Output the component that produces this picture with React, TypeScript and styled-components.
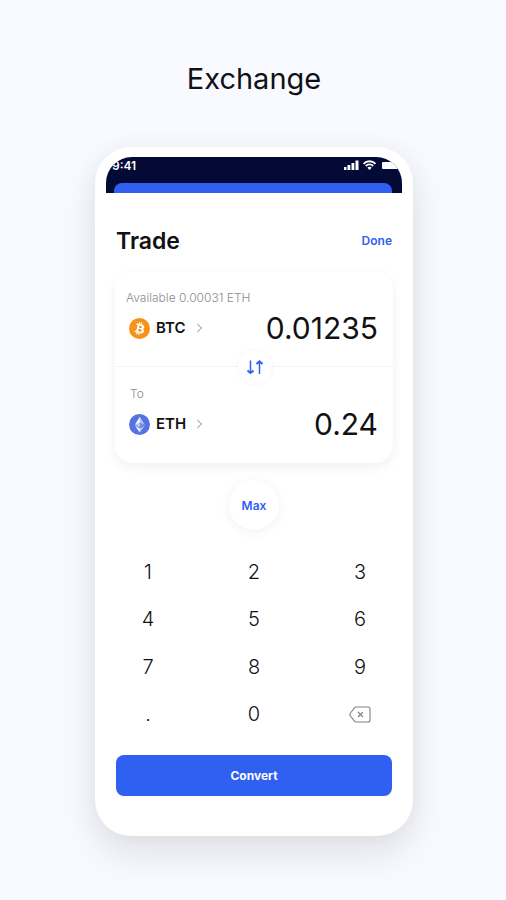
import React from "react";
import styled, { createGlobalStyle } from "styled-components";

const blue = "#3060f2";

const GlobalStyle = createGlobalStyle`
  *, *::before, *::after { box-sizing: border-box; }
  body {
    margin: 0;
    background: #f8faff;
    color: #111114;
    font-family: Inter, "Liberation Sans", sans-serif;
  }
  button { font-family: inherit; color: inherit; border: 0; padding: 0; background: none; cursor: pointer; }
`;

const Page = styled.main`
  min-height: 100vh;
  display: flex;
  flex-direction: column;
  align-items: center;
  padding: 61px 15px 63px 17px;
  background: #f8faff;
`;

const PageTitle = styled.h1`
  margin: 0 0 50px;
  font-size: 29px;
  line-height: 36px;
  font-weight: 400;
`;

const Phone = styled.section`
  width: 100%;
  max-width: 318px;
  padding: 10px 0 40px;
  border-radius: 36px;
  background: #fff;
  box-shadow: 0 18px 36px rgba(20, 22, 30, 0.1), 0 0 24px rgba(20, 22, 30, 0.04);
`;

const StatusBar = styled.div`
  margin: 0 11px;
  height: 36px;
  display: flex;
  flex-direction: column;
  justify-content: space-between;
  overflow: hidden;
  border-radius: 26px 26px 0 0;
  background: #020a35;
  color: #fff;
`;

const StatusRow = styled.div`
  display: flex;
  align-items: center;
  justify-content: space-between;
  height: 18px;
  padding-left: 6px;
`;

const Clock = styled.span`
  font-size: 12px;
  line-height: 18px;
  font-weight: 600;
`;

const SheetBehind = styled.div`
  height: 10px;
  margin: 0 10px 0 8px;
  border-radius: 8px 8px 0 0;
  background: ${blue};
`;

const Header = styled.header`
  display: flex;
  align-items: center;
  justify-content: space-between;
  margin: 32px 21px 14px;
  height: 32px;
`;

const Heading = styled.h2`
  margin: 0;
  font-size: 23px;
  line-height: 32px;
  font-weight: 600;
`;

const LinkButton = styled.button`
  font-size: 12px;
  line-height: 16px;
  font-weight: 600;
  color: ${blue};
`;

const Card = styled.div`
  position: relative;
  margin: 0 20px;
  border-radius: 18px;
  background: #fff;
  box-shadow: 0 4px 12px rgba(20, 22, 30, 0.06);
`;

const Side = styled.div<{ $divided?: boolean }>`
  height: 96px;
  padding: 19px 15px 0 11px;
  border-bottom: ${(p) => (p.$divided ? "1px solid #f4f4f5" : "0")};
`;

const Caption = styled.div<{ $inset?: boolean }>`
  padding-left: ${(p) => (p.$inset ? "4px" : "0")};
  font-size: 12px;
  line-height: 16px;
  font-weight: 300;
  color: #8c8c90;
`;

const AssetRow = styled.div`
  display: flex;
  align-items: center;
  justify-content: space-between;
  height: 44px;
`;

const AssetButton = styled.button`
  display: flex;
  align-items: center;
  gap: 6px;
  padding-left: 3px;
  font-size: 15px;
  line-height: 20px;
  font-weight: 600;

  svg:last-child { margin-left: 4px; }
`;

const Amount = styled.span`
  font-size: 30px;
  line-height: 40px;
`;

const SwapButton = styled.button`
  position: absolute;
  top: 50%;
  left: 50%;
  width: 34px;
  height: 34px;
  margin: -17px 0 0 -16px;
  display: grid;
  place-items: center;
  border-radius: 50%;
  background: #fff;
  box-shadow: 0 0 4px rgba(20, 22, 30, 0.05);
`;

const MaxButton = styled.button`
  display: block;
  width: 50px;
  height: 50px;
  margin: 17px auto 18px;
  border-radius: 50%;
  background: #fff;
  box-shadow: 0 2px 12px rgba(20, 22, 30, 0.06);
  color: ${blue};
  font-size: 12px;
  font-weight: 600;
`;

const Keypad = styled.div`
  display: grid;
  grid-template-columns: repeat(3, 1fr);
  grid-auto-rows: 1fr;
  height: 190px;
`;

const Key = styled.button`
  display: grid;
  place-items: center;
  font-size: 20px;
  line-height: 24px;
  font-weight: 300;
`;

const Footer = styled.div`
  padding: 17px 21px 0;
`;

const ConvertButton = styled.button`
  width: 100%;
  height: 41px;
  border-radius: 8px;
  background: ${blue};
  color: #fff;
  font-size: 12px;
  font-weight: 700;
`;

const StatusIcons = () => (
  <svg width="59" height="18" viewBox="0 0 59 18" fill="#fff" aria-hidden="true">
    <rect x="1" y="10" width="2.5" height="3" />
    <rect x="4.5" y="8" width="2.8" height="5" />
    <rect x="8.5" y="6" width="2.8" height="7" />
    <rect x="12.5" y="3.5" width="3" height="9.5" />
    <g fill="none" stroke="#fff" strokeWidth="1.8">
      <path d="M20.5 6.8a8.3 8.3 0 0 1 12 0" />
      <path d="M22.8 9a5.2 5.2 0 0 1 7.4 0" />
    </g>
    <path d="M24.3 10.8a3.1 3.1 0 0 1 4.4 0L26.5 13z" />
    <rect x="39" y="5" width="17" height="7" rx="1" />
  </svg>
);

const Chevron = () => (
  <svg width="7" height="10" viewBox="0 0 7 10" fill="none" stroke="#b4b4b8" strokeWidth="1.2" aria-hidden="true">
    <path d="M1.2 1 5.5 5 1.2 9" />
  </svg>
);

const Bitcoin = () => (
  <svg width="21" height="21" viewBox="0 0 32 32" aria-hidden="true">
    <circle cx="16" cy="16" r="16" fill="#f7931a" />
    <path
      fill="#fff"
      d="M23.19 14.02c.31-2.1-1.29-3.23-3.47-3.98l.71-2.84-1.73-.43-.69 2.77-1.38-.33.69-2.78-1.72-.43-.71 2.84-1.1-.26-2.39-.6-.46 1.85s1.28.3 1.26.31c.7.18.83.64.8 1.01l-1.96 7.87c-.09.21-.31.54-.8.41.02.03-1.26-.31-1.26-.31l-.86 1.98 3.48.88-.72 2.87 1.73.43.71-2.84 1.38.36-.71 2.83 1.73.43.72-2.87c2.95.56 5.17.33 6.1-2.34.75-2.14-.03-3.38-1.59-4.19 1.13-.26 1.98-1 2.21-2.54zm-3.95 5.54c-.53 2.15-4.15.99-5.32.7l.95-3.81c1.17.29 4.93.87 4.37 3.11zm.53-5.57c-.49 1.95-3.5.96-4.47.72l.86-3.46c.98.25 4.12.7 3.61 2.74z"
    />
  </svg>
);

const Ethereum = () => (
  <svg width="21" height="21" viewBox="0 0 32 32" aria-hidden="true">
    <circle cx="16" cy="16" r="16" fill="#5572e0" />
    <g fill="#fff">
      <path fillOpacity=".6" d="M16.5 4v8.87l7.49 3.35z" />
      <path d="M16.5 4 9 16.22l7.5-3.35z" />
      <path fillOpacity=".6" d="M16.5 21.97v6.03L24 17.62z" />
      <path d="M16.5 28v-6.03L9 17.62z" />
      <path fillOpacity=".2" d="m16.5 20.57 7.49-4.35-7.49-3.35z" />
      <path fillOpacity=".6" d="m9 16.22 7.5 4.35v-7.7z" />
    </g>
  </svg>
);

const SwapArrows = () => (
  <svg width="20" height="18" viewBox="0 0 20 18" fill="none" stroke={blue} strokeWidth="1.5" aria-hidden="true">
    <path d="M5.5 2.5v12M14.5 16V4" />
    <path d="M2.5 12.4 5.5 15l3-2.6M11.5 6l3-2.6 3 2.6" strokeWidth="2" />
  </svg>
);

const Backspace = () => (
  <svg width="22" height="17" viewBox="0 0 22 17" fill="none" stroke="#808084" strokeWidth="1.1" aria-hidden="true">
    <path d="M7 1h12a2 2 0 0 1 2 2v11a2 2 0 0 1-2 2H7a2 2 0 0 1-1.4-.6L1.5 10a2.2 2.2 0 0 1 0-3l4.1-5.4A2 2 0 0 1 7 1z" />
    <path d="m9 6 5 5m0-5-5 5" />
  </svg>
);

const keys = ["1", "2", "3", "4", "5", "6", "7", "8", "9", ".", "0"];

export default function App() {
  return (
    <Page>
      <GlobalStyle />
      <PageTitle>Exchange</PageTitle>
      <Phone>
        <StatusBar>
          <StatusRow>
            <Clock>9:41</Clock>
            <StatusIcons />
          </StatusRow>
          <SheetBehind />
        </StatusBar>
        <Header>
          <Heading>Trade</Heading>
          <LinkButton type="button">Done</LinkButton>
        </Header>
        <Card>
          <Side $divided>
            <Caption>Available 0.00031 ETH</Caption>
            <AssetRow>
              <AssetButton type="button">
                <Bitcoin />
                BTC
                <Chevron />
              </AssetButton>
              <Amount>0.01235</Amount>
            </AssetRow>
          </Side>
          <Side>
            <Caption $inset>To</Caption>
            <AssetRow>
              <AssetButton type="button">
                <Ethereum />
                ETH
                <Chevron />
              </AssetButton>
              <Amount>0.24</Amount>
            </AssetRow>
          </Side>
          <SwapButton type="button" aria-label="Swap currencies">
            <SwapArrows />
          </SwapButton>
        </Card>
        <MaxButton type="button">Max</MaxButton>
        <Keypad>
          {keys.map((k) => (
            <Key key={k} type="button">
              {k}
            </Key>
          ))}
          <Key type="button" aria-label="Delete">
            <Backspace />
          </Key>
        </Keypad>
        <Footer>
          <ConvertButton type="button">Convert</ConvertButton>
        </Footer>
      </Phone>
    </Page>
  );
}
